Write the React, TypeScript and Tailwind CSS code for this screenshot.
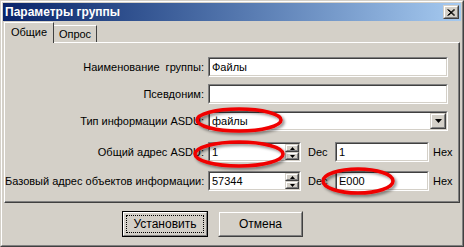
import type { ReactNode } from 'react'

const raisedOuter = 'border border-t-[#d4d0c8] border-l-[#d4d0c8] border-b-[#404040] border-r-[#404040]'
const raisedInner = 'border border-t-white border-l-white border-b-[#808080] border-r-[#808080]'

function Field({ className = '', children }: { className?: string; children?: ReactNode }) {
  return (
    <div className={`h-[20px] border border-t-[#808080] border-l-[#808080] border-b-white border-r-white ${className}`}>
      <div className="flex h-full items-center border border-t-[#404040] border-l-[#404040] border-b-[#d4d0c8] border-r-[#d4d0c8] bg-white">
        {children}
      </div>
    </div>
  )
}

function SmallButton({ className = '', children }: { className?: string; children?: ReactNode }) {
  return (
    <div className={`${raisedOuter} bg-[#d4d0c8] ${className}`}>
      <div className={`${raisedInner} flex h-full w-full items-center justify-center`}>{children}</div>
    </div>
  )
}

function Spin({ value }: { value: string }) {
  return (
    <Field className="w-[93px]">
      <span className="flex-1 pl-[2px]">{value}</span>
      <div className="flex h-full w-[14px] flex-col">
        <SmallButton className="h-[8px]">
          <svg width="5" height="3" viewBox="0 0 5 3">
            <path d="M2.5 0 L5 3 L0 3 Z" fill="#000" />
          </svg>
        </SmallButton>
        <SmallButton className="h-[8px]">
          <svg width="5" height="3" viewBox="0 0 5 3">
            <path d="M0 0 L5 0 L2.5 3 Z" fill="#000" />
          </svg>
        </SmallButton>
      </div>
    </Field>
  )
}

function Row({ label, className = '', children }: { label: string; className?: string; children: ReactNode }) {
  return (
    <div className={`flex items-center ${className}`}>
      <div className="w-[200px] whitespace-pre pr-[1px] text-right">{label}</div>
      <div className="ml-[3px] flex items-center">{children}</div>
    </div>
  )
}

export default function App() {
  return (
    <div className="relative h-[247px] w-[464px] overflow-hidden bg-[#d4d0c8] font-['Liberation_Sans',Arial,sans-serif] text-[11px] text-black">
      <div className={`h-full w-full ${raisedOuter}`}>
        <div className={`flex h-full w-full flex-col p-[1px] ${raisedInner}`}>
          {/* Title bar */}
          <div className="flex h-[18px] items-center bg-gradient-to-r from-[#0a246a] to-[#a6caf0] pl-[2px] pr-[2px]">
            <span className="flex-1 text-[12px] font-bold text-white">Параметры группы</span>
            <SmallButton className="h-[14px] w-[16px]">
              <svg width="8" height="7" viewBox="0 0 8 7">
                <path d="M0.5 0.5 L7 6.5 M1.5 0.5 L8 6.5 M7 0.5 L0.5 6.5 M8 0.5 L1.5 6.5" stroke="#000" strokeWidth="1" />
              </svg>
            </SmallButton>
          </div>

          {/* Tabs */}
          <div className="mt-[1px] flex items-end pl-[1px]">
            <div className="relative z-10 -mb-[1px] flex h-[21px] w-[50px] items-center justify-center border-l border-t border-r border-t-white border-l-white border-r-[#404040] bg-[#d4d0c8] pb-[1px]">
              Общие
            </div>
            <div className="flex h-[17px] w-[43px] items-center justify-center border-t border-r border-t-white border-r-[#404040]">
              Опрос
            </div>
          </div>

          {/* Page */}
          <div className="ml-[1px] mr-[1px] h-[161px] border border-t-white border-l-white border-b-[#404040] border-r-[#404040]">
            <div className="h-full border-b border-r border-b-[#808080] border-r-[#808080] pt-[14px]">
              <Row label="Наименование  группы:">
                <Field className="w-[240px]">
                  <span className="pl-[2px]">Файлы</span>
                </Field>
              </Row>
              <Row label="Псевдоним:" className="mt-[7px]">
                <Field className="w-[240px]" />
              </Row>
              <Row label="Тип информации ASDU:" className="mt-[7px]">
                <Field className="w-[240px]">
                  <span className="flex-1 pl-[2px]">файлы</span>
                  <SmallButton className="h-full w-[16px]">
                    <svg width="7" height="4" viewBox="0 0 7 4">
                      <path d="M0 0 L7 0 L3.5 4 Z" fill="#000" />
                    </svg>
                  </SmallButton>
                </Field>
              </Row>
              <Row label="Общий адрес ASDU:" className="mt-[11px]">
                <Spin value="1" />
                <span className="ml-[7px] w-[27px]">Dec</span>
                <Field className="w-[94px]">
                  <span className="pl-[2px]">1</span>
                </Field>
                <span className="ml-[4px]">Hex</span>
              </Row>
              <Row label="Базовый адрес объектов информации:" className="mt-[9px]">
                <Spin value="57344" />
                <span className="ml-[7px] w-[27px]">Dec</span>
                <Field className="w-[94px]">
                  <span className="pl-[2px]">E000</span>
                </Field>
                <span className="ml-[4px]">Hex</span>
              </Row>
            </div>
          </div>

          {/* Buttons */}
          <div className="mt-[8px] flex pl-[119px]">
            <div className="h-[26px] w-[86px] border border-black">
              <div className={`h-full w-full ${raisedInner} p-[2px]`}>
                <div className="flex h-full w-full items-center justify-center border border-dotted border-black text-[12px]">
                  Установить
                </div>
              </div>
            </div>
            <SmallButton className="ml-[10px] h-[26px] w-[85px]">
              <span className="text-[12px]">Отмена</span>
            </SmallButton>
          </div>
        </div>
      </div>

      {/* Red annotation ellipses */}
      <svg className="pointer-events-none absolute inset-0" width="464" height="247" viewBox="0 0 464 247">
        <defs>
          <filter id="sh" x="-20%" y="-40%" width="140%" height="180%">
            <feDropShadow dx="2" dy="2" stdDeviation="1.5" floodColor="#000" floodOpacity="0.45" />
          </filter>
        </defs>
        <g fill="none" stroke="#f00000" strokeWidth="3.5" filter="url(#sh)">
          <ellipse cx="239" cy="120" rx="42" ry="11" />
          <ellipse cx="239" cy="154" rx="44" ry="12" />
          <ellipse cx="358" cy="181" rx="35" ry="12" />
        </g>
      </svg>
    </div>
  )
}
